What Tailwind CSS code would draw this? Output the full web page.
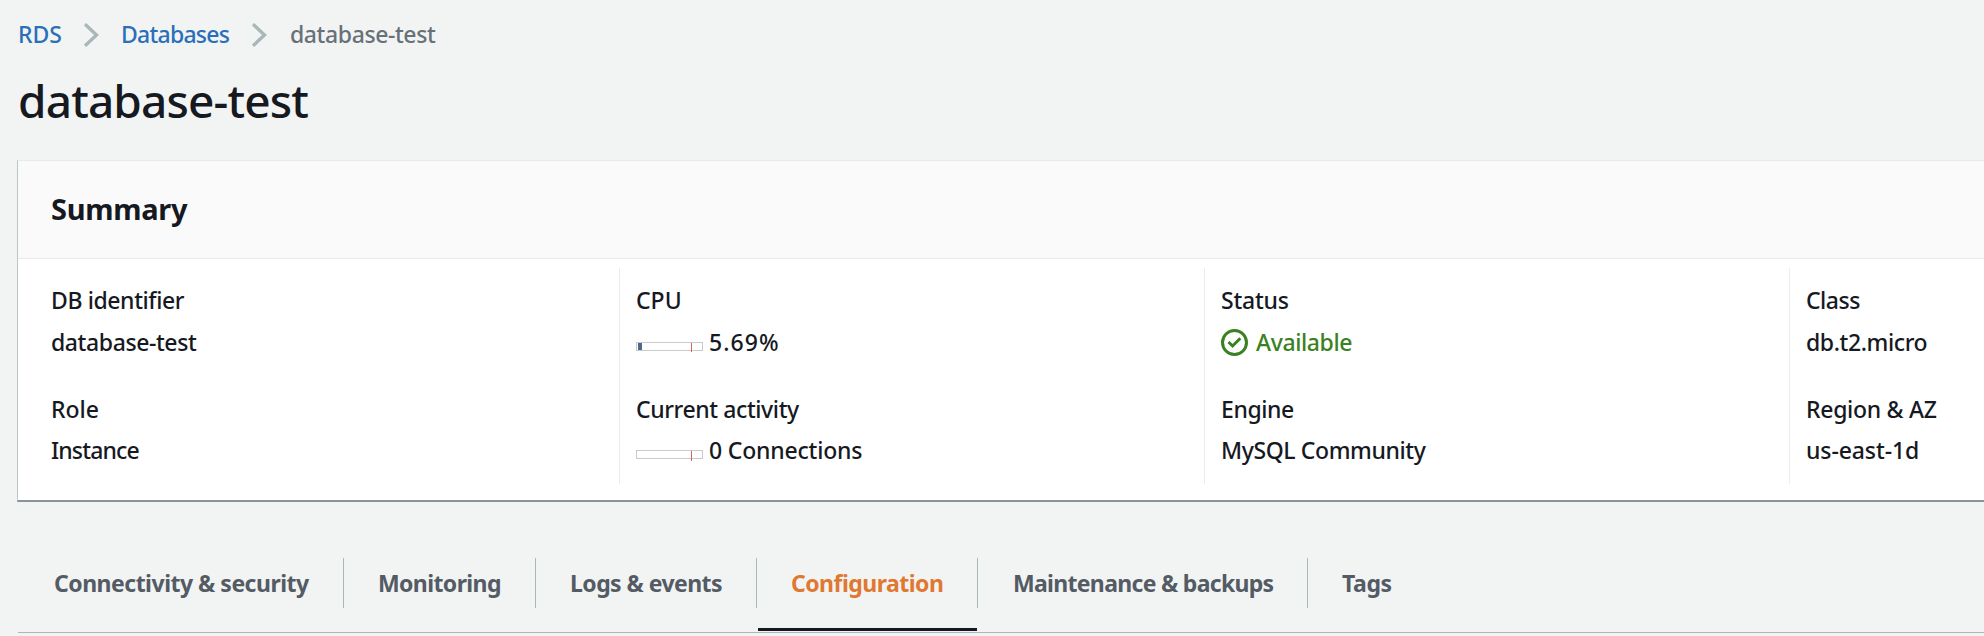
<!DOCTYPE html>
<html lang="en">
<head>
<meta charset="utf-8">
<title>database-test - RDS</title>
<script src="https://cdn.jsdelivr.net/npm/@tailwindcss/browser@4"></script>
</head>
<body class="h-[636px] overflow-hidden bg-[#f2f4f4] font-['Noto_Sans',sans-serif] text-[23px] leading-[30px] font-medium text-[#16191f]">
<nav class="flex h-[30px] mt-[19px] pl-[18px] whitespace-nowrap">
  <a class="w-[66px] text-[#2a6fb8] tracking-[0px]">RDS</a>
  <svg class="mt-1 w-[15px] h-6 mr-[22px]" viewBox="0 0 15 24" fill="none" stroke="#aab7b8" stroke-width="3.4"><path d="M1 1.2 12.5 12 1 22.8"/></svg>
  <a class="w-[131px] text-[#2a6fb8] tracking-[-0.75px]">Databases</a>
  <svg class="mt-1 w-[15px] h-6 mr-[23px]" viewBox="0 0 15 24" fill="none" stroke="#aab7b8" stroke-width="3.4"><path d="M1 1.2 12.5 12 1 22.8"/></svg>
  <span class="text-[#687078] tracking-[-0.4px]">database-test</span>
</nav>
<h1 class="mt-[23px] ml-[18px] text-[46px] leading-[56px] tracking-[-0.85px]">database-test</h1>
<section class="mt-8 ml-[17px] h-[342px] overflow-hidden border-t border-l border-t-[#e6eaea] border-l-[#bcc6c8] border-b-2 border-b-[#87959a] bg-white">
  <header class="h-[98px] border-b border-[#e8eaea] bg-[#fafafa] pl-[33px] pb-[2px] flex items-center">
    <h2 class="text-[29px] font-bold leading-9 tracking-[-0.3px]">Summary</h2>
  </header>
  <div class="mt-[9px] ml-[17px] grid h-[216px] w-[2340px] grid-cols-4 whitespace-nowrap">
    <div class="border-r border-[#eaeded] pl-4 pt-[17px]">
      <div class="tracking-[-0.4px]">DB identifier</div>
      <div class="mt-3 tracking-[-0.4px]">database-test</div>
      <div class="mt-[37px] tracking-[0px]">Role</div>
      <div class="mt-[11px] tracking-[-0.85px]">Instance</div>
    </div>
    <div class="border-r border-[#eaeded] pl-4 pt-[17px]">
      <div class="tracking-[0px]">CPU</div>
      <div class="mt-3 flex h-[30px] items-center">
        <div class="mt-[9px] flex h-[9px] w-[67px] border border-[#cacaca] pl-px pr-[10px] justify-between"><i class="h-[7px] w-1 bg-[#4d6a8d]"></i><i class="h-[9px] w-px bg-[#d9635a]"></i></div>
        <span class="ml-1.5 tracking-[1.1px]">5.69%</span>
      </div>
      <div class="mt-[37px] tracking-[-0.4px]">Current activity</div>
      <div class="mt-[11px] flex h-[30px] items-center">
        <div class="mt-[9px] flex h-[9px] w-[67px] border border-[#cacaca] pr-[10px] justify-end"><i class="h-[10px] w-px bg-[#d9635a] shrink-0"></i></div>
        <span class="ml-1.5 tracking-[-0.2px]">0 Connections</span>
      </div>
    </div>
    <div class="border-r border-[#eaeded] pl-4 pt-[17px]">
      <div class="tracking-[-0.2px]">Status</div>
      <div class="mt-3 flex h-[30px] items-center text-[#3a8121]">
        <svg class="w-[27px] h-[27px] mr-2" viewBox="0 0 27 27" fill="none" stroke="currentColor" stroke-width="3"><circle cx="13.5" cy="13.5" r="12"/><path d="m7.5 13 4.1 4L19.3 9.3"/></svg>
        <span class="tracking-[-0.4px]">Available</span>
      </div>
      <div class="mt-[37px] tracking-[-0.4px]">Engine</div>
      <div class="mt-[11px] tracking-[-0.4px]">MySQL Community</div>
    </div>
    <div class="pl-4 pt-[17px]">
      <div class="tracking-[-0.5px]">Class</div>
      <div class="mt-3 tracking-[-0.4px]">db.t2.micro</div>
      <div class="mt-[37px] tracking-[-0.3px]">Region &amp; AZ</div>
      <div class="mt-[11px] tracking-[-0.1px]">us-east-1d</div>
    </div>
  </div>
</section>
<div class="mt-14 ml-[18px] flex h-[75px] border-b border-[#aab7b8] font-bold leading-[50px] text-[#545b64] whitespace-nowrap">
  <div class="h-[50px] w-[326px] border-r border-[#aab7b8] pl-9 tracking-[-0.5px]">Connectivity &amp; security</div>
  <div class="h-[50px] w-48 border-r border-[#aab7b8] pl-[34px] tracking-[-0.6px]">Monitoring</div>
  <div class="h-[50px] w-[221px] border-r border-[#aab7b8] pl-[34px] tracking-[-0.55px]">Logs &amp; events</div>
  <div class="w-[221px]">
    <div class="h-[50px] border-r border-[#aab7b8] pl-[34px] text-[#e07831] tracking-[-0.52px]">Configuration</div>
    <div class="mt-5 ml-px mr-px h-[3px] bg-[#16191f]"></div>
  </div>
  <div class="h-[50px] w-[330px] border-r border-[#aab7b8] pl-[35px] tracking-[-0.69px]">Maintenance &amp; backups</div>
  <div class="pl-[34px] tracking-[-0.4px]">Tags</div>
</div>
</body>
</html>
